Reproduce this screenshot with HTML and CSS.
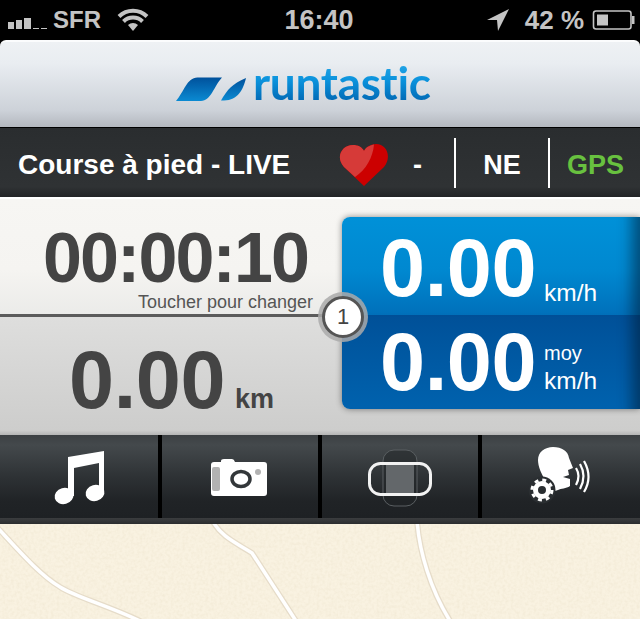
FILE: index.html
```html
<!DOCTYPE html>
<html lang="fr">
<head>
    <meta charset="UTF-8">
    <meta name="viewport" content="width=device-width, initial-scale=1.0">
    <title>Runtastic</title>
    <link rel="stylesheet" href="styles.css">
</head>
<body>
    <div class="phone">
        <!-- Barre de statut -->
        <div class="status">
            <div class="status-left">
                <div class="signal">
                    <i class="bar bar-1"></i><i class="bar bar-2"></i><i class="bar bar-3"></i><i class="bar bar-4"></i><i class="bar bar-5"></i>
                </div>
                <span class="carrier">SFR</span>
                <svg class="wifi" viewBox="117 6 35 26" width="35" height="26">
                    <path d="M134 30l-5-6a7.500 7.500 0 0 1 10 0z" fill="#c4c4c4"/>
                    <path d="M124.500 20.500a13.500 13.500 0 0 1 19 0" fill="none" stroke="#c4c4c4" stroke-width="4"/>
                    <path d="M120 15.500a20 20 0 0 1 28 0" fill="none" stroke="#c4c4c4" stroke-width="4"/>
                </svg>
            </div>
            <span class="clock">16:40</span>
            <div class="status-right">
                <svg class="arrow" viewBox="484 6 26 26" width="26" height="26">
                    <path d="M486 19L508 8L497 30L496 19z" fill="#c4c4c4"/>
                </svg>
                <span class="percent">42 %</span>
                <svg class="battery" viewBox="592 8 44 22" width="44" height="22">
                    <rect x="593.500" y="10" width="37.500" height="18" rx="2.500" fill="none" stroke="#c4c4c4" stroke-width="1.600"/>
                    <rect x="597" y="13.500" width="11" height="11" fill="#c4c4c4"/>
                    <rect x="632" y="15" width="2.500" height="8" fill="#c4c4c4"/>
                </svg>
            </div>
        </div>

        <!-- Logo -->
        <div class="header">
            <svg class="swoosh" viewBox="175 76 72 26" width="72" height="26">
                <defs>
                    <linearGradient id="swooshFill" x1="0" y1="0" x2="0" y2="1">
                        <stop offset="0" stop-color="#00519c"/>
                        <stop offset="1" stop-color="#0a8ad2"/>
                    </linearGradient>
                </defs>
                <path d="M176 101C184 92 187 77 198 77.500L222 77.500C214 86 211 101 201 101z" fill="url(#swooshFill)"/>
                <path d="M221 100.500C227 90 232 84 246 78C243 90 238 100 224 100.500z" fill="url(#swooshFill)"/>
            </svg>
            <span class="logo-text">runtastic</span>
        </div>

        <!-- Infos activite -->
        <div class="info">
            <span class="sport">Course à pied - LIVE</span>
            <svg class="heart" viewBox="338 142 52 46" width="52" height="46">
                <path d="M364 186L344 167C335 157 342 145 353 145C358 145 362 147 364 151C366 147 371 144 376 144C387 144 392 157 384 167z" fill="#cc0000"/>
                <path d="M355 177L344 167C335 157 342 145 353 145C358 145 362 147 364 151C366 147 369 146 374 144.500C373 157 366 170 355 177z" fill="#d63a38"/>
            </svg>
            <span class="pulse">-</span>
            <i class="sep"></i>
            <span class="compass">NE</span>
            <i class="sep"></i>
            <span class="gps">GPS</span>
        </div>

        <!-- Chiffres -->
        <div class="stats">
            <div class="stats-left">
                <div class="cell-time">
                    <span class="time">00:00:10</span>
                    <span class="hint">Toucher pour changer</span>
                </div>
                <div class="cell-dist">
                    <span class="big">0.00</span>
                    <span class="km">km</span>
                </div>
            </div>
            <div class="panel">
                <div class="panel-row panel-top">
                    <span class="big">0.00</span>
                    <span class="unit">km/h</span>
                </div>
                <div class="panel-row panel-bottom">
                    <span class="big">0.00</span>
                    <span class="unit"><span class="unit-small">moy</span><br>km/h</span>
                </div>
            </div>
            <div class="badge">1</div>
        </div>

        <!-- Boutons -->
        <div class="toolbar">
            <div class="tool">
                <svg viewBox="49 445 60 63" width="60" height="63">
                    <g fill="#fff">
                        <path d="M68 496V457L104 451V493H99V463L74 468V496z"/>
                        <ellipse cx="64" cy="496" rx="9.500" ry="8" transform="rotate(-15 64 496)"/>
                        <ellipse cx="95" cy="493" rx="9.500" ry="8" transform="rotate(-15 95 493)"/>
                    </g>
                </svg>
            </div>
            <div class="tool">
                <svg viewBox="207 453 66 47" width="66" height="47">
                    <path d="M214 462H221V461Q221 459 224 459H232Q234 459 235 462H264Q267 462 267 465V493Q267 496 264 496H214Q211 496 211 493V465Q211 462 214 462z" fill="#fff"/>
                    <rect x="212" y="467" width="8" height="24" rx="2" fill="#b2b2b2"/>
                    <ellipse cx="241" cy="479" rx="9" ry="7.500" fill="#fff" stroke="#33373a" stroke-width="3.500"/>
                    <circle cx="258" cy="472" r="3" fill="#b2b2b2"/>
                </svg>
            </div>
            <div class="tool">
                <svg viewBox="360 445 80 63" width="80" height="63">
                    <rect x="383" y="450" width="34" height="56" rx="11" fill="#1f2326" fill-opacity=".5" stroke="#5a5f62"/>
                    <rect x="386" y="462" width="28" height="33" fill="#63676a"/>
                    <rect x="369.500" y="463.500" width="61" height="31" rx="11" fill="none" stroke="#f2f2f2" stroke-width="3"/>
                </svg>
            </div>
            <div class="tool">
                <svg viewBox="527 445 68 63" width="68" height="63">
                    <path d="M553 447C562 447 568 451 569 458L573 468L568 470L569 475L563 477L570 479L570 486C566 489 561 488 558 490L552 492L548 485C541 474 538 466 538 460C538 452 545 447 553 447z" fill="#fff"/>
                    <circle cx="542" cy="490" r="13.500" fill="#2a2e31"/>
                    <circle cx="542" cy="490" r="6.500" fill="none" stroke="#fff" stroke-width="5"/>
                    <circle cx="542" cy="490" r="10" fill="none" stroke="#fff" stroke-width="3" stroke-dasharray="3.900 3.950"/>
                    <g fill="none" stroke="#fff" stroke-width="2.200">
                        <path d="M576 468Q581 476 576 485"/>
                        <path d="M580 464Q587 476 580 489"/>
                        <path d="M584 461Q593 477 584 492"/>
                    </g>
                </svg>
            </div>
        </div>
        <div class="toolbar-edge"></div>

        <!-- Carte -->
        <svg class="map" viewBox="0 524 640 95" width="640" height="95">
            <defs>
                <filter id="paper">
                    <feTurbulence type="fractalNoise" baseFrequency="0.35" numOctaves="2" seed="4"/>
                    <feColorMatrix values="0 0 0 0 0.6  0 0 0 0 0.5  0 0 0 0 0.3  0 0 0 0.25 -0.09"/>
                </filter>
            </defs>
            <rect x="0" y="524" width="640" height="95" filter="url(#paper)"/>
            <g fill="none" stroke-linecap="round" stroke-linejoin="round">
                <g stroke="#e6dcc9" stroke-width="6">
                    <path d="M-4 526C20 552 40 575 60 587C75 597 110 606 142 622"/>
                    <path d="M212 520C220 535 232 541 252 553L298 624"/>
                    <path d="M417 520C419 550 430 590 452 624"/>
                </g>
                <g stroke="#fff" stroke-width="3.500">
                    <path d="M-4 526C20 552 40 575 60 587C75 597 110 606 142 622"/>
                    <path d="M212 520C220 535 232 541 252 553L298 624"/>
                    <path d="M417 520C419 550 430 590 452 624"/>
                </g>
            </g>
        </svg>
    </div>
</body>
</html>
```

FILE: styles.css
```css
body {
    margin: 0;
    background: #000;
    font-family: "Liberation Sans", Arial, sans-serif;
}

.phone {
    width: 640px;
    height: 619px;
    overflow: hidden;
    display: flex;
    flex-direction: column;
}

/* Barre de statut */
.status {
    height: 40px;
    flex: none;
    display: flex;
    align-items: center;
    justify-content: space-between;
    color: #c4c4c4;
    font-weight: bold;
    background: #000;
}

.status-left,
.status-right {
    width: 200px;
    display: flex;
    align-items: center;
}

.status-left {
    padding-left: 8px;
}

.status-right {
    justify-content: flex-end;
    padding-right: 4px;
}

.signal {
    display: flex;
    align-items: flex-end;
    gap: 2px;
    height: 12px;
    margin-top: 6px;
}

.bar {
    display: block;
    width: 6px;
    background: #c4c4c4;
}

.bar-1 { height: 7px; }
.bar-2 { height: 9px; }
.bar-3 { height: 11px; width: 7px; }
.bar-4 { height: 1px; }
.bar-5 { height: 1px; }

.carrier {
    font-size: 24px;
    margin-left: 6px;
}

.wifi {
    margin-left: 15px;
}

.clock {
    font-size: 27px;
    margin-left: -6px;
}

.percent {
    font-size: 26px;
    margin-left: 14px;
    margin-right: 8px;
}

/* Logo */
.header {
    height: 87px;
    flex: none;
    box-sizing: border-box;
    border-top: 2px solid #fbfcfd;
    border-radius: 6px 6px 0 0;
    background: linear-gradient(#eef1f4 0%, #e9edf1 25%, #cdd2d9 80%, #b4b8bf 100%);
    display: flex;
    align-items: flex-end;
    gap: 6px;
    padding: 0 0 25px 175px;
}

.logo-text {
    font-family: Lato, sans-serif;
    font-size: 46px;
    font-weight: bold;
    line-height: 46px;
    letter-spacing: -0.300px;
    margin-bottom: -4px;
    background: linear-gradient(#29a9e8 0%, #0a92dc 45%, #0060ac 100%);
    -webkit-background-clip: text;
    background-clip: text;
    color: transparent;
}

/* Infos activite */
.info {
    height: 69px;
    margin-top: 1px;
    flex: none;
    display: flex;
    align-items: center;
    color: #fff;
    font-weight: bold;
    font-size: 27px;
    background: linear-gradient(#2a2d2f 0%, #2f3234 85%, #222426 100%);
    border-bottom: 2px solid #fff;
}

.sport,
.pulse,
.compass,
.gps {
    padding-top: 5px;
}

.sport {
    margin-left: 18px;
    width: 320px;
    font-size: 28px;
}

.heart {
    margin-top: 4px;
}

.pulse {
    width: 41px;
    margin-left: 23px;
}

.sep {
    display: block;
    width: 2px;
    height: 50px;
    background: #fff;
}

.compass {
    width: 92px;
    text-align: center;
}

.gps {
    margin-left: 17px;
    color: #68c13f;
}

/* Chiffres */
.stats {
    position: relative;
    height: 236px;
    flex: none;
    box-sizing: border-box;
    display: flex;
    padding: 18px 0 26px;
    background: linear-gradient(#f7f6f3 0%, #f5f4f1 30%, #ebebe9 49%, #dededd 50%, #cdcdcc 98%, #b5b5b5 100%);
}

.stats-left {
    width: 342px;
    margin: -18px 0 -26px;
    display: flex;
    flex-direction: column;
}

.cell-time {
    height: 118px;
    box-sizing: border-box;
    border-bottom: 3px solid #5b5b5b;
    display: flex;
    flex-direction: column;
    align-items: flex-end;
    padding: 24px 29px 0 0;
    color: #444;
}

.time {
    font-size: 70px;
    font-weight: bold;
    line-height: 70px;
    letter-spacing: -1.900px;
    margin-right: 5px;
}

.hint {
    font-size: 18px;
    line-height: 18px;
    color: #555;
}

.cell-dist {
    display: flex;
    align-items: baseline;
    padding: 16px 0 0 69px;
    color: #444;
}

.big {
    font-size: 81px;
    font-weight: bold;
    line-height: 94px;
    letter-spacing: -0.400px;
}

.km {
    font-size: 27px;
    font-weight: bold;
    margin-left: 10px;
}

.panel {
    flex: 1;
    border-radius: 8px 0 0 8px;
    box-shadow: 0 0 6px rgba(0, 0, 0, 0.45);
    overflow: hidden;
    display: flex;
    flex-direction: column;
    color: #fff;
}

.panel-row {
    display: flex;
    padding-left: 38px;
    box-shadow: inset -22px 0 14px -14px rgba(0, 25, 50, 0.55);
}

.panel-top {
    height: 98px;
    align-items: flex-end;
    background: linear-gradient(#0091d8 0%, #0088d0 55%, #0070ba 100%);
}

.panel-bottom {
    height: 94px;
    align-items: center;
    background: linear-gradient(#005098 0%, #00569f 30%, #0062ae 100%);
}

.unit {
    font-size: 24.500px;
    line-height: 28px;
    margin-left: 8px;
}

.unit-small {
    font-size: 20px;
}

.panel-top .unit {
    margin-bottom: 8px;
}

.panel-bottom .unit {
    margin-top: 8px;
}

.badge {
    position: absolute;
    left: 322px;
    top: 97px;
    width: 36px;
    height: 36px;
    border: 3px solid #555;
    border-radius: 50%;
    background: #fff;
    box-shadow: 0 0 0 4px rgba(170, 170, 170, 0.85);
    color: #444;
    font-size: 22px;
    line-height: 36px;
    text-align: center;
}

/* Boutons */
.toolbar {
    height: 83px;
    flex: none;
    display: grid;
    grid-template-columns: 158px 156px 156px 158px;
    gap: 4px;
    background: #000;
}

.tool {
    display: flex;
    align-items: center;
    justify-content: center;
    background: linear-gradient(#3c4043 0%, #44494c 12%, #2e3235 50%, #202326 80%, #1e2124 100%);
}

.toolbar-edge {
    height: 6px;
    flex: none;
    background: linear-gradient(#3b3d3f, #2b2d2f);
}

/* Carte */
.map {
    display: block;
    flex: none;
    background: #f9f2e1;
}
```
